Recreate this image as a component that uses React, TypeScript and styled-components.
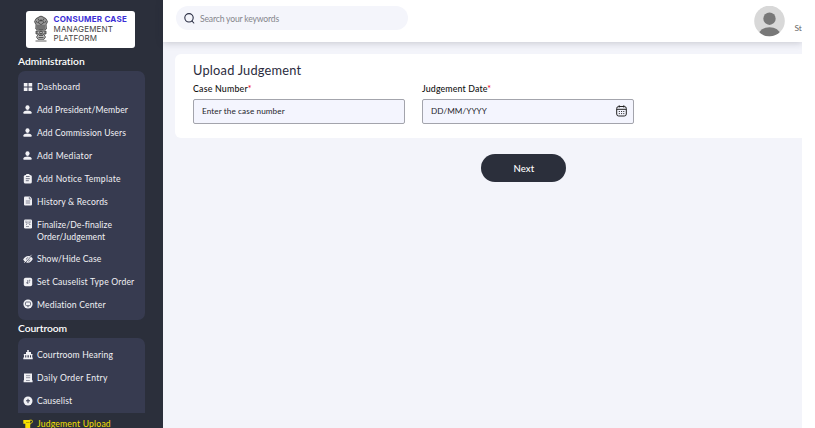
import React from "react";
import styled, { createGlobalStyle } from "styled-components";

const GlobalStyle = createGlobalStyle`
  * { box-sizing: border-box; }
  body { margin: 0; background: #fff; font-family: Lato, "Open Sans", sans-serif; overflow: hidden; }
`;

const Shell = styled.div`
  display: flex;
  width: 802px;
  height: 428px;
  overflow: hidden;
  background: #f3f4fa;
`;

const Sidebar = styled.aside`
  flex: none;
  width: 162.5px;
  height: 428px;
  padding: 11px 18px 0;
  overflow: hidden;
  background: #2b2f3b;
`;

const Brand = styled.div`
  display: flex;
  align-items: center;
  width: 108.5px;
  height: 36.5px;
  margin-left: 8px;
  padding-left: 6px;
  gap: 3.5px;
  border-radius: 3px;
  background: #fff;
`;

const BrandText = styled.div`
  display: flex;
  flex-direction: column;
  padding-top: 0.5px;
`;

const BrandLine = styled.span<{ $strong?: boolean; $track: number }>`
  font-family: Inter, sans-serif;
  font-size: 8px;
  line-height: 9.7px;
  font-weight: ${(p) => (p.$strong ? 700 : 400)};
  color: ${(p) => (p.$strong ? "#3b2fd6" : "#444")};
  letter-spacing: ${(p) => p.$track}px;
  white-space: nowrap;
`;

const GroupTitle = styled.h2<{ $top: number; $track: number }>`
  margin: ${(p) => p.$top}px 0 0;
  height: 18px;
  font-size: 10.3px;
  line-height: 17px;
  font-weight: 600;
  letter-spacing: ${(p) => p.$track}px;
  color: #fff;
`;

const Group = styled.nav<{ $height: number; $pad: number }>`
  height: ${(p) => p.$height}px;
  padding-top: ${(p) => p.$pad}px;
  border-radius: 7px;
  background: #373b50;
`;

const Item = styled.a<{ $active?: boolean; $tall?: boolean }>`
  display: flex;
  align-items: flex-start;
  gap: 4px;
  height: ${(p) => (p.$tall ? 34.3 : 22.92)}px;
  padding: 5.1px 0 0 5px;
  color: ${(p) => (p.$active ? "#f7e000" : "#f1f1f5")};
  background: ${(p) => (p.$active ? "#2b2f3b" : "transparent")};
`;

const ItemIcon = styled.svg`
  flex: none;
  width: 10px;
  height: 10px;
  margin-top: 0.8px;
`;

const ItemText = styled.span<{ $track: number }>`
  font-size: 8.6px;
  line-height: 12.4px;
  letter-spacing: ${(p) => p.$track}px;
  white-space: pre;
`;

const Main = styled.main`
  display: flex;
  flex: 1;
  flex-direction: column;
  min-width: 0;
`;

const TopBar = styled.header`
  display: flex;
  flex: none;
  align-items: flex-start;
  height: 41.5px;
  padding: 6px 0 0 13px;
  background: #fff;
  box-shadow: 0 1px 7px rgba(40, 42, 60, 0.22);
`;

const Search = styled.div`
  display: flex;
  align-items: center;
  width: 232.5px;
  height: 24px;
  padding: 0 0 0 8px;
  gap: 5.5px;
  border-radius: 12px;
  background: #f4f5fb;
`;

const SearchText = styled.span`
  font-size: 8.6px;
  color: #85868c;
  letter-spacing: -0.17px;
  padding-top: 2px;
`;

const Profile = styled.div`
  display: flex;
  margin-left: auto;
  width: 48.5px;
  gap: 10px;
`;

const Avatar = styled.svg`
  flex: none;
`;

const ProfileName = styled.span`
  padding-top: 17px;
  font-size: 8.4px;
  letter-spacing: -0.1px;
  color: #666;
  white-space: nowrap;
`;

const Card = styled.section`
  flex: none;
  height: 84.5px;
  margin: 12px 0 0 12.5px;
  padding: 8.2px 0 0 18px;
  border-radius: 6px 0 0 6px;
  background: #fff;
`;

const CardTitle = styled.h1`
  margin: 0;
  font-size: 12.8px;
  line-height: 17px;
  font-weight: 400;
  letter-spacing: 0.22px;
  color: #2b2c40;
`;

const Fields = styled.div`
  display: flex;
  gap: 17.5px;
  margin-top: 3.8px;
`;

const Field = styled.label`
  display: flex;
  flex-direction: column;
  width: 211.5px;
`;

const Label = styled.span<{ $track: number }>`
  height: 16.5px;
  font-size: 8.8px;
  line-height: 13px;
  font-weight: 500;
  letter-spacing: ${(p) => p.$track}px;
  color: #111;
`;

const Star = styled.span`
  color: #f00018;
`;

const Control = styled.div`
  display: flex;
  align-items: center;
  justify-content: space-between;
  height: 25.5px;
  padding: 0 6px 1px 8px;
  border: 1px solid #a3a4ac;
  border-radius: 2px;
  background: #f4f5fe;
`;

const Placeholder = styled.span<{ $track: number }>`
  font-size: 8.2px;
  letter-spacing: ${(p) => p.$track}px;
  color: #25262c;
`;

const NextButton = styled.button`
  flex: none;
  align-self: flex-start;
  width: 85px;
  height: 28px;
  margin: 16px 0 0 318.9px;
  padding: 0;
  border: 0;
  border-radius: 14px;
  font: 500 9.6px Lato, sans-serif;
  letter-spacing: 0.1px;
  color: #fff;
  background: #2b2f3b;
`;

const Emblem = () => (
  <svg width="18" height="28" viewBox="0 0 18 28" fill="none" stroke="#3d3d3d" strokeWidth=".8">
    <path d="M6 2.5Q9-.3 12 2.5l2 1.2 1.5 3-1.4 3 .3 4.300-2 1H5.800l-2-1 .2-4.300-1.500-3L4 3.700z" fill="#999" />
    <path d="M6 3.5l1.2 2L6.5 8 9 9.6 11.5 8l-.7-2.5L12 3.5M4 6l1.5 2M14 6l-1.5 2M6 10v4M8 10v5M10 10v5M12 10v4" />
    <path d="M4 16h10v3H4zM5 16v3M13 16v3M6.500 19L4.500 22l1.500 2.300h6L13.500 22l-2-3" fill="#bbb" />
    <path d="M3.500 26h11M7 20.500h4M6.500 22.500h5" />
    <circle cx="9" cy="17.500" r="1.400" />
    <circle cx="9" cy="5.500" r=".7" fill="#3d3d3d" />
  </svg>
);

const hole = "#373b50";

const icons: Record<string, React.ReactNode> = {
  grid: <path d="M.8 1h3.7v3.5H.8zM5.5 1h3.7v3.5H5.5zM.8 5.5h3.7V9H.8zM5.5 5.5h3.7V9H5.5z" />,
  user: (
    <>
      <ellipse cx="4.500" cy="2.600" rx="2.100" ry="2.300" />
      <path d="M.5 8.700V7.300Q1 5.600 4.500 5.600t4 1.700v1.400z" />
    </>
  ),
  clip: (
    <>
      <rect x=".8" y="1" width="8" height="8.500" rx="1.600" />
      <rect x="3" y="0" width="3.600" height="2.200" rx=".8" />
      <path d="M3 2.500h3.600M2.800 4.700h4M2.800 6.700h3" stroke={hole} strokeWidth=".7" />
    </>
  ),
  file: (
    <>
      <path d="M2 .5h5L9 2.600V8.500q0 1-1 1H2q-1 0-1-1v-7q0-1 1-1z" />
      <path d="M6.300 1v2h2M2.800 5h4.300M2.800 7h4.300" fill="none" stroke={hole} strokeWidth=".6" />
    </>
  ),
  order: (
    <>
      <rect x="1" y=".5" width="8" height="9" rx="1.300" />
      <path d="M3 1.500v2.500h4V1.500M5 1.800v1M3 5.500h1M6 5.500h1.500M3 7.500h3" fill="none" stroke={hole} strokeWidth=".5" />
    </>
  ),
  eye: (
    <>
      <path d="M.2 5.500Q2 2 5.300 2t4.500 3Q8 8.700 5 8.700T.2 5.500z" />
      <path d="M1.500 9.500L9.300.8" stroke={hole} strokeWidth=".9" />
      <path d="M1.200 8.900L8.600.8" stroke="currentColor" strokeWidth=".7" />
      <path d="M3.300 5.600Q3.500 3.500 5.300 3.500M5 7.300q2 0 2.100-2" fill="none" stroke={hole} strokeWidth=".6" />
    </>
  ),
  list: (
    <>
      <rect x=".8" y=".7" width="8.400" height="8.600" rx="1.800" />
      <path d="M4.800 3v4M3.200 5.800h1.600M6 3.300h1.300M6 5h1" fill="none" stroke={hole} strokeWidth=".7" />
    </>
  ),
  center: (
    <>
      <circle cx="5" cy="5" r="4.600" />
      <rect x="2.500" y="3" width="5" height="3.600" rx="1" fill="none" stroke={hole} strokeWidth=".7" />
      <path d="M4 7.700h2" stroke={hole} strokeWidth=".6" />
    </>
  ),
  court: (
    <path d="M4.200 0h1.600v2.500H4.200zM3 2h5v2h1.500v1.200H.8V4H3zM1 5h1.200v3H1zM3.300 5h1.200v3H3.300zM5.800 5H7v3H5.800zM8 5h1.200v3H8zM.3 7.500h9.400v1.800H.3z" />
  ),
  daily: (
    <>
      <path d="M1 .5h8v6.800h.6v2H.6v-2H1z" />
      <path d="M3 2.700h4.200M3 4.700h4.200M3 7.500h3.800" stroke={hole} strokeWidth=".5" />
    </>
  ),
  plus: (
    <>
      <circle cx="5" cy="5" r="4.500" />
      <path d="M5 2.800v4.400M3 4.800h4" stroke={hole} strokeWidth="1" />
    </>
  ),
  upload: (
    <>
      <path d="M.3 1h6.900v7.500q0 1.500-1.500 1.500H2.300V4.800H.3z" />
      <path d="M6.500 1.200h1.800q1.200 0 1.200 1.300T8.300 4L6.700 5.500" fill="none" stroke="currentColor" strokeWidth=".9" />
      <path d="M3.500 3.500h1M5.500 3.500h.8" stroke="#2b2f3b" strokeWidth=".7" />
    </>
  ),
};

type Entry = { icon: string; text: string; track: number; active?: boolean; tall?: boolean };

const administration: Entry[] = [
  { icon: "grid", text: "Dashboard", track: 0.28 },
  { icon: "user", text: "Add President/Member", track: 0.11 },
  { icon: "user", text: "Add Commission Users", track: 0.11 },
  { icon: "user", text: "Add Mediator", track: 0.28 },
  { icon: "clip", text: "Add Notice Template", track: 0.27 },
  { icon: "file", text: "History & Records", track: 0.17 },
  { icon: "order", text: "Finalize/De-finalize\nOrder/Judgement", track: 0.1, tall: true },
  { icon: "eye", text: "Show/Hide Case", track: 0.1 },
  { icon: "list", text: "Set Causelist Type Order", track: 0.19 },
  { icon: "center", text: "Mediation Center", track: 0.17 },
];

const courtroom: Entry[] = [
  { icon: "court", text: "Courtroom Hearing", track: 0.17 },
  { icon: "daily", text: "Daily Order Entry", track: 0.3 },
  { icon: "plus", text: "Causelist", track: 0.15 },
  { icon: "upload", text: "Judgement Upload", track: 0.2, active: true },
];

const Entries = ({ entries }: { entries: Entry[] }) => (
  <>
    {entries.map((e) => (
      <Item key={e.text} $active={e.active} $tall={e.tall}>
        <ItemIcon viewBox="0 0 10 10" fill="currentColor">{icons[e.icon]}</ItemIcon>
        <ItemText $track={e.track}>{e.text}</ItemText>
      </Item>
    ))}
  </>
);

export default function App() {
  return (
    <>
      <GlobalStyle />
      <Shell>
        <Sidebar>
          <Brand>
            <Emblem />
            <BrandText>
              <BrandLine $strong $track={0.24}>CONSUMER CASE</BrandLine>
              <BrandLine $track={0.15}>MANAGEMENT</BrandLine>
              <BrandLine $track={0.1}>PLATFORM</BrandLine>
            </BrandText>
          </Brand>
          <GroupTitle $top={5} $track={-0.04}>Administration</GroupTitle>
          <Group $height={249} $pad={5.5}><Entries entries={administration} /></Group>
          <GroupTitle $top={0} $track={-0.1}>Courtroom</GroupTitle>
          <Group $height={100} $pad={6.4}><Entries entries={courtroom} /></Group>
        </Sidebar>
        <Main>
          <TopBar>
            <Search>
              <svg width="11" height="11" viewBox="0 0 11 11" fill="none" stroke="#2b2f45" strokeWidth="1.1">
                <circle cx="5" cy="4.800" r="4.200" />
                <path d="M8 8l1.800 2" strokeLinecap="round" />
              </svg>
              <SearchText>Search your keywords</SearchText>
            </Search>
            <Profile>
              <Avatar width="31" height="31" viewBox="0 0 31 31">
                <clipPath id="avatar"><circle cx="15.500" cy="15" r="15.300" /></clipPath>
                <g clipPath="url(#avatar)">
                  <rect width="31" height="31" fill="#d8d8d8" />
                  <circle cx="15.500" cy="12.700" r="6.200" fill="#787878" />
                  <ellipse cx="15.500" cy="28.500" rx="10.500" ry="7.300" fill="#787878" />
                </g>
              </Avatar>
              <ProfileName>St</ProfileName>
            </Profile>
          </TopBar>
          <Card>
            <CardTitle>Upload Judgement</CardTitle>
            <Fields>
              <Field>
                <Label $track={0.2}>Case Number<Star>*</Star></Label>
                <Control><Placeholder $track={0.09}>Enter the case number</Placeholder></Control>
              </Field>
              <Field>
                <Label $track={0.14}>Judgement Date<Star>*</Star></Label>
                <Control>
                  <Placeholder $track={0.05}>DD/MM/YYYY</Placeholder>
                  <svg width="11" height="12" viewBox="0 0 11 12" fill="none" stroke="#222" strokeWidth="1">
                    <rect x=".7" y="1.500" width="9.600" height="9.500" rx="2" />
                    <path d="M.7 4.300h9.600M3.200.3v2.200M7.800.3v2.200" />
                    <path d="M2.800 6.500h1.100M5 6.500h1.100M7.200 6.500h1.100M2.800 8.600h1.100M5 8.600h1.100M7.200 8.600h1.100" strokeWidth=".9" />
                  </svg>
                </Control>
              </Field>
            </Fields>
          </Card>
          <NextButton>Next</NextButton>
        </Main>
      </Shell>
    </>
  );
}
